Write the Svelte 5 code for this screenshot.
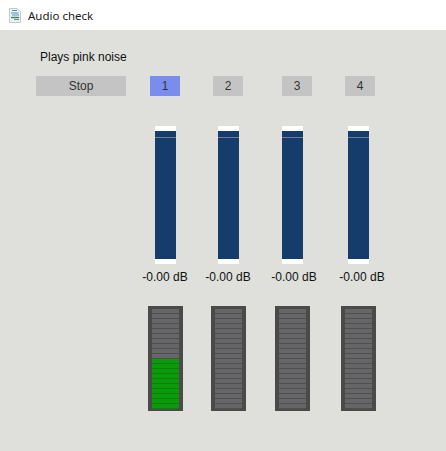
<script lang="ts">
  const channels = [
    { id: 1, level: 10 },
    { id: 2, level: 0 },
    { id: 3, level: 0 },
    { id: 4, level: 0 },
  ];
  const segments = Array.from({ length: 20 }, (_, i) => 20 - i);
  let active = $state(1);
</script>

<div class="window">
  <header class="titlebar">
    <svg class="app-icon" width="12" height="15" viewBox="0 0 12 15">
      <path d="M0.5 0.5H8L11.5 3.5V14.5H0.5Z" fill="#eef2f5" stroke="#c3c8cc" />
      <path d="M3 2.5H8M2 5H9.5M3 7H10" stroke="#4b93b8" stroke-width="1.2" fill="none" />
      <path d="M2 9.5H10" stroke="#3f7f63" stroke-width="1.4" />
      <path d="M5 11.5H10" stroke="#7c8c96" stroke-width="1.2" />
    </svg>
    <span class="title">Audio check</span>
  </header>

  <main class="content">
    <p class="label">Plays pink noise</p>

    <div class="buttons">
      <button class="stop">Stop</button>
      {#each channels as ch}
        <button class="channel" class:active={active === ch.id} onclick={() => (active = ch.id)}>{ch.id}</button>
      {/each}
    </div>

    <div class="faders">
      {#each channels as ch}
        <div class="fader"><span class="mark"></span></div>
      {/each}
    </div>

    <div class="readouts">
      {#each channels as ch}
        <span class="db">-0.00 dB</span>
      {/each}
    </div>

    <div class="meters">
      {#each channels as ch}
        <div class="meter">
          {#each segments as n}
            <span class="segment" class:lit={n <= ch.level}></span>
          {/each}
        </div>
      {/each}
    </div>
  </main>
</div>

<style>
  :global(body) {
    margin: 0;
    background: #dfe0dc;
  }

  .window {
    display: flex;
    flex-direction: column;
    height: 451px;
    overflow: hidden;
    font-family: "Liberation Sans", Arial, sans-serif;
    font-size: 12px;
    color: #111;
  }

  .titlebar {
    display: flex;
    align-items: center;
    gap: 7px;
    height: 30px;
    padding-left: 9px;
    background: #fff;
    flex-shrink: 0;
  }

  .title {
    font-family: "Noto Sans", sans-serif;
    font-size: 11.5px;
    color: #1a1a1a;
  }

  .content {
    flex: 1;
    background: #dfe0dc;
  }

  .label {
    margin: 20px 0 0 40px;
    height: 14px;
    line-height: 14px;
  }

  .buttons {
    display: flex;
    gap: 33px;
    margin: 12px 0 0 36px;
  }

  button {
    height: 20px;
    width: 30px;
    padding: 0;
    border: none;
    background: #c4c4c4;
    color: #333;
    font: inherit;
  }

  .stop {
    width: 90px;
    margin-right: -9px;
  }

  .channel:nth-child(4) {
    margin-left: 6px;
  }

  .channel.active {
    background: #7a8ded;
  }

  .faders {
    display: flex;
    gap: 42px;
    margin: 30px 0 0 155px;
  }

  .fader {
    position: relative;
    width: 21px;
    height: 128px;
    background: #153c6b;
    border-top: 5px solid #fff;
    border-bottom: 5px solid #fff;
  }

  .fader:nth-child(2) {
    margin-right: 1px;
  }

  .fader:nth-child(3) {
    margin-right: 3px;
  }

  .mark {
    position: absolute;
    top: 6px;
    left: 0;
    right: 0;
    height: 1px;
    background: #6d7f93;
  }

  .readouts {
    display: flex;
    margin: 6px 0 0 142px;
    height: 14px;
    line-height: 14px;
  }

  .db {
    width: 46px;
    text-align: center;
    margin-right: 17px;
    white-space: nowrap;
  }

  .db:nth-child(2) {
    margin-right: 20px;
  }

  .db:nth-child(3) {
    margin-right: 22px;
  }

  .meters {
    display: flex;
    gap: 28px;
    margin: 22px 0 0 148px;
  }

  .meter {
    display: flex;
    flex-direction: column;
    width: 27px;
    height: 100px;
    padding: 3px 4px 2px;
    background: #4a4b49;
  }

  .meter:nth-child(2) {
    margin-right: 1px;
  }

  .meter:nth-child(3) {
    margin-right: 3px;
  }

  .segment {
    flex: 1;
    background: #666668;
    border-bottom: 1px solid #4e4f4f;
  }

  .segment.lit {
    background: #0a9a0a;
    border-bottom-color: #0d7d10;
  }
</style>
